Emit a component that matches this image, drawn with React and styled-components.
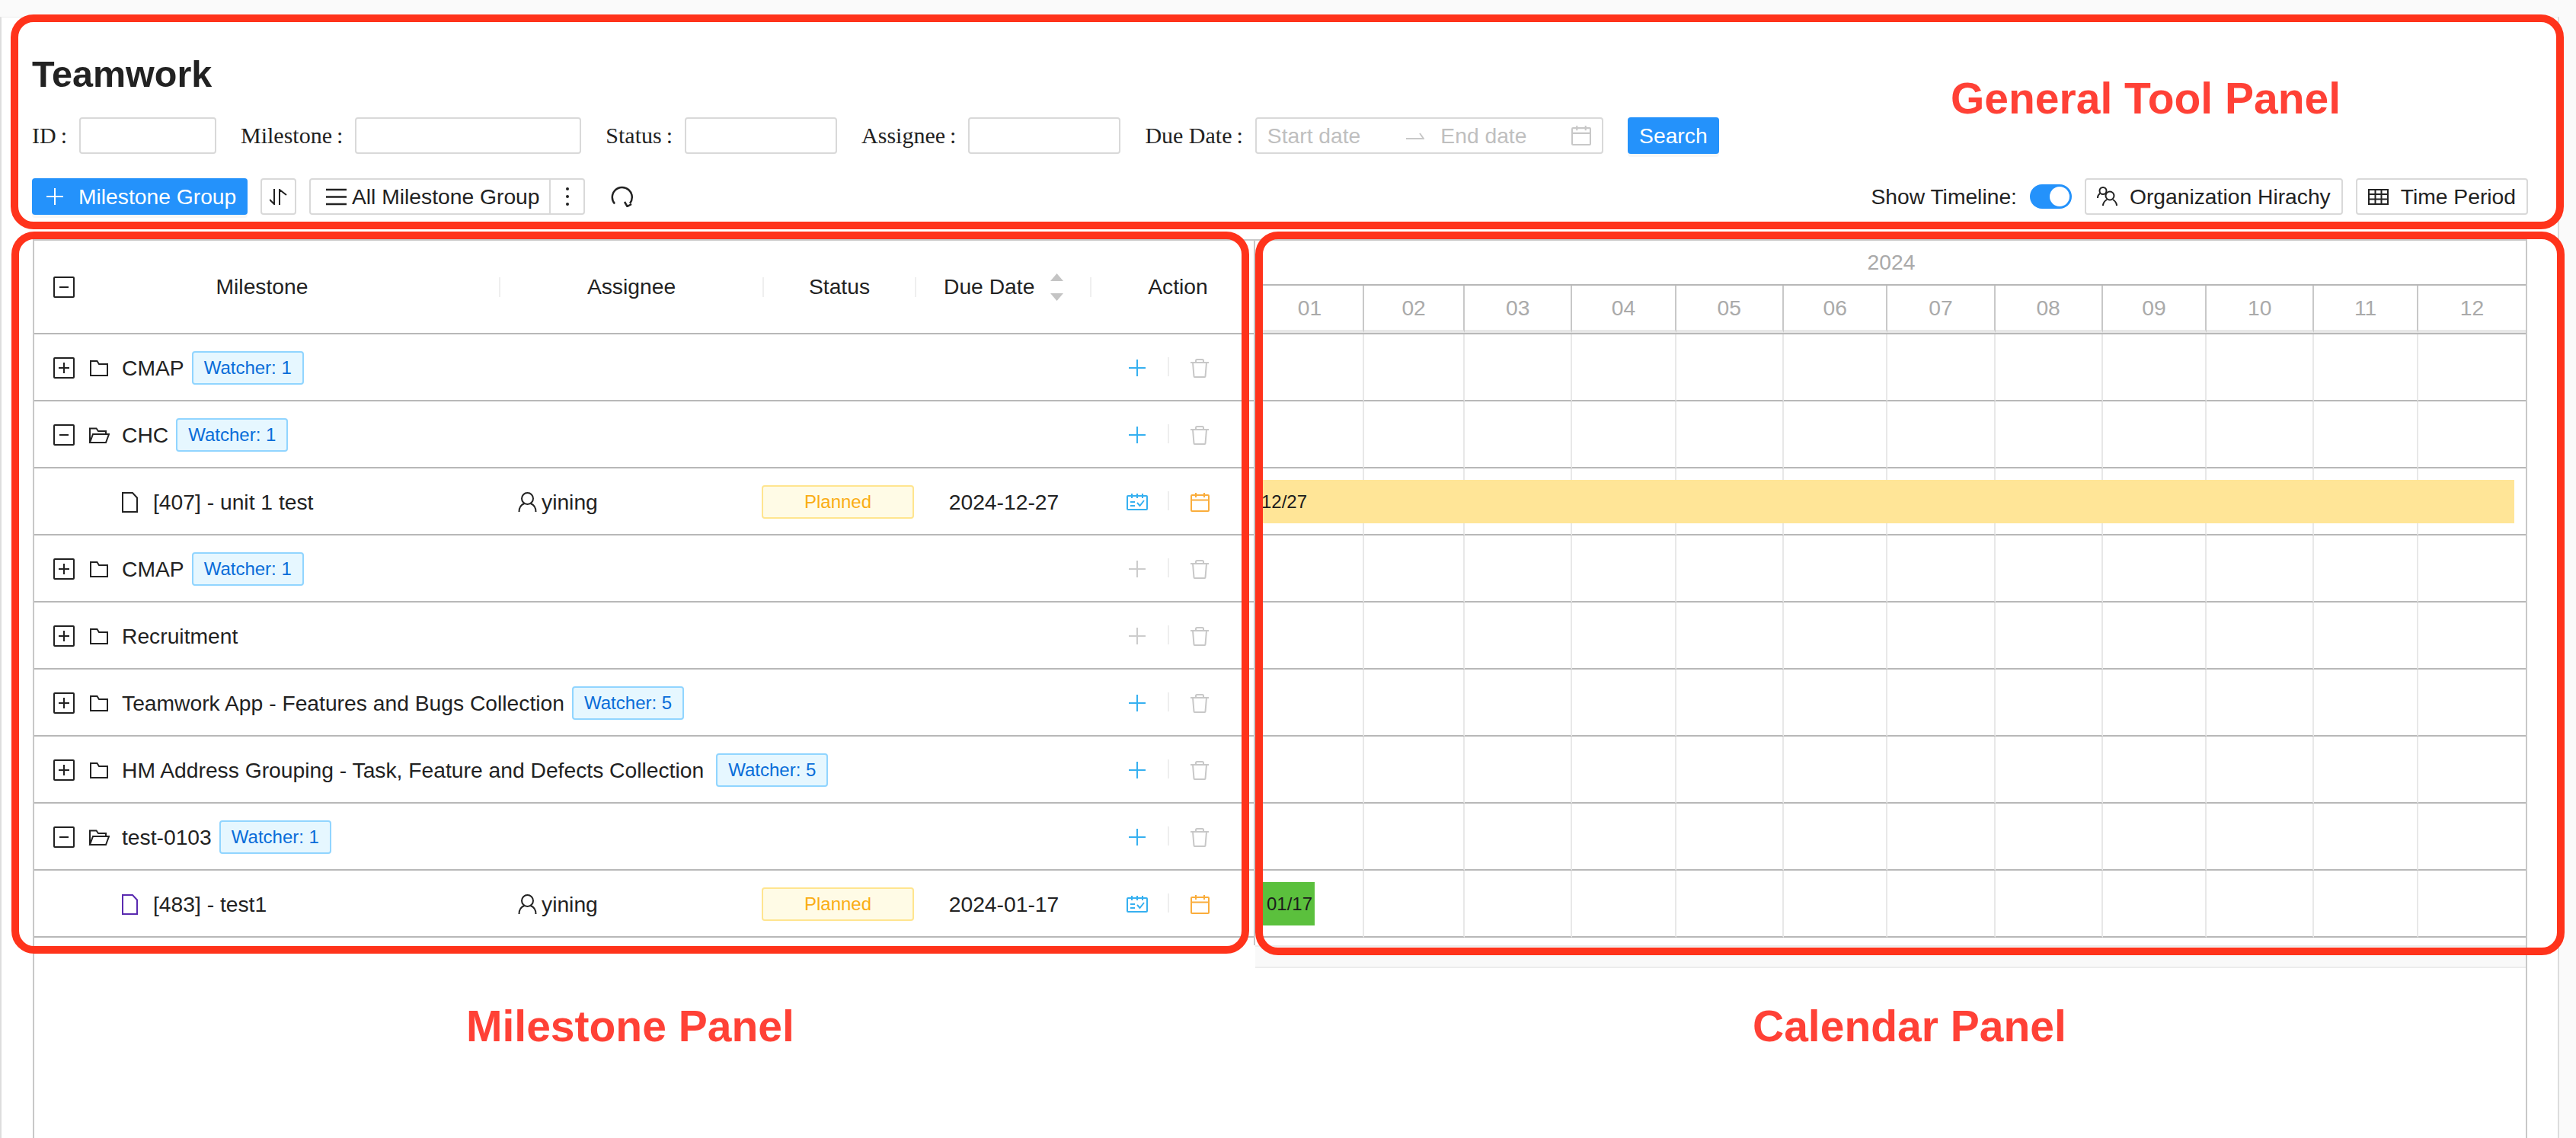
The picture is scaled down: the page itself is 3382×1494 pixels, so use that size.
import React from 'react';
import styled, {createGlobalStyle} from 'styled-components';

const GlobalStyle = createGlobalStyle`
  html, body {
    margin: 0;
    padding: 0;
    background: #fafafa;
  }
  * {
    box-sizing: border-box;
  }
`;

const Page = styled.div`
  position: relative;
  width: 3382px;
  height: 1494px;
  padding: 22px 22px 0 0;
  overflow: hidden;
  font-family: "Liberation Sans", Arial, sans-serif;
  font-size: 28.25px;
  color: #222;
`;

const Card = styled.div`
  display: flex;
  flex-direction: column;
  height: 100%;
  padding: 46px 42px 0 40px;
  background: #fff;
  border-left: 2px solid #ddd;
  border-right: 2px solid #ddd;
  border-top: 1px solid #eee;
`;

const Title = styled.h1`
  margin: 0 0 29px;
  font-size: 48.5px;
  line-height: 56px;
  font-weight: 700;
  color: #222;
`;

const FilterRow = styled.div`
  display: flex;
  gap: 32px;
  height: 48px;
`;

const Field = styled.label`
  display: flex;
  align-items: center;
  gap: 16px;
`;

const FieldLabel = styled.span`
  font-family: "Liberation Serif", "Times New Roman", serif;
  font-size: 30px;
  color: #222;
  white-space: nowrap;

  &::after {
    content: ":";
    margin-left: 6px;
  }
`;

const TextInput = styled.input`
  width: ${p => p.$w}px;
  height: 48px;
  border: 2px solid #d9d9d9;
  border-radius: 4px;
  background: #fff;
`;

const RangeInput = styled.div`
  display: flex;
  align-items: center;
  width: 457px;
  height: 48px;
  padding: 0 14px;
  border: 2px solid #d9d9d9;
  border-radius: 4px;
  color: #bfbfbf;
`;

const RangeText = styled.span`
  width: ${p => p.$w}px;
  margin-left: ${p => p.$left || 0}px;
`;

const SearchButton = styled.button`
  width: 120px;
  height: 48px;
  padding: 0;
  border: 0;
  border-radius: 4px;
  background: #2492fb;
  box-shadow: 0 4px 0 rgba(0, 0, 0, 0.03);
  color: #fff;
  font: inherit;
`;

const Toolbar = styled.div`
  display: flex;
  align-items: center;
  justify-content: space-between;
  height: 48px;
  margin: 32px -3px 32px 0;
`;

const ToolGroup = styled.div`
  display: flex;
  align-items: center;
  gap: 17px;
`;

const PrimaryButton = styled.button`
  display: flex;
  align-items: center;
  gap: 20px;
  width: 283px;
  height: 48px;
  padding: 0 0 0 19px;
  border: 0;
  border-radius: 4px;
  background: #2492fb;
  box-shadow: 0 4px 0 rgba(0, 0, 0, 0.03);
  color: #fff;
  font: inherit;
`;

const DefaultButton = styled.button`
  display: flex;
  align-items: center;
  gap: 16px;
  height: 48px;
  padding: 0 ${p => p.$pad || 14}px;
  border: 2px solid #d9d9d9;
  border-radius: 4px;
  background: #fff;
  color: #222;
  font: inherit;
  white-space: nowrap;
`;

const SplitButton = styled.div`
  display: flex;
  align-items: stretch;
  width: 362px;
  height: 48px;
  border: 2px solid #d9d9d9;
  border-radius: 4px;
`;

const SplitMain = styled.div`
  display: flex;
  align-items: center;
  gap: 7px;
  width: 315px;
  padding-left: 20px;
  border-right: 2px solid #d9d9d9;
  white-space: nowrap;
`;

const SplitMore = styled.div`
  flex: 1;
  display: flex;
  align-items: center;
  justify-content: center;
`;

const RefreshHolder = styled.div`
  display: flex;
  margin-left: 17px;
`;

const SwitchLabel = styled.span`
  white-space: nowrap;
`;

const Switch = styled.div`
  display: flex;
  align-items: center;
  justify-content: flex-end;
  width: 55px;
  height: 32px;
  padding-right: 3px;
  border-radius: 16px;
  background: #2492fb;
`;

const SwitchKnob = styled.div`
  width: 26px;
  height: 26px;
  border-radius: 50%;
  background: #fff;
`;

const Board = styled.div`
  flex: 1;
  display: flex;
  align-items: flex-start;
  margin: 0 0 0 1px;
  width: 3275px;
  border: 2px solid #c8c8c8;
  border-bottom: 0;
`;

const MilestonePanel = styled.div`
  width: 1603px;
  padding-bottom: 10px;
  border-right: 2px solid #c8c8c8;
`;

const TABLE_COLUMNS = '612px 346px 200px 230px 213px';

const HeaderRow = styled.div`
  display: grid;
  grid-template-columns: ${TABLE_COLUMNS};
  align-items: center;
  height: 123px;
  border-bottom: 2px solid #b8b8b8;
`;

const HeaderCell = styled.div`
  display: flex;
  align-items: center;
  justify-content: ${p => p.$justify || 'center'};
  gap: 21px;
  height: 26px;
  padding-left: ${p => p.$left || 0}px;
  border-right: ${p => (p.$last ? 0 : '2px solid #efefef')};
`;

const HeaderName = styled.span`
  flex: 1;
  padding-right: 86px;
  text-align: center;
`;

const SortIcons = styled.span`
  display: flex;
  flex-direction: column;
  gap: 16px;
`;

const TableRow = styled.div`
  display: grid;
  grid-template-columns: ${TABLE_COLUMNS};
  align-items: center;
  height: 88px;
  padding-top: 2px;
  border-bottom: 2px solid #b8b8b8;
`;

const NameCell = styled.div`
  grid-column: ${p => (p.$wide ? '1 / 5' : 'auto')};
  display: flex;
  align-items: center;
  padding-left: ${p => p.$left}px;
`;

const Expander = styled.span`
  display: flex;
  align-items: center;
  justify-content: center;
  flex: none;
  width: 28px;
  height: 28px;
  margin-right: ${p => p.$gap}px;
  border: 2px solid #222;
  border-radius: 2px;
`;

const FolderSlot = styled.span`
  display: flex;
  justify-content: center;
  width: 28px;
  margin-right: 16px;
  margin-left: -2px;
`;

const Tag = styled.span`
  display: inline-flex;
  align-items: center;
  justify-content: center;
  height: 44px;
  padding: 0 ${p => (p.$block ? 0 : 14)}px;
  width: ${p => (p.$block ? '200px' : 'auto')};
  margin-left: ${p => p.$gap}px;
  border: 2px solid ${p => (p.$tone === 'gold' ? '#ffe58f' : '#91d5ff')};
  border-radius: 4px;
  background: ${p => (p.$tone === 'gold' ? '#fffbe6' : '#e6f7ff')};
  color: ${p => (p.$tone === 'gold' ? '#faad14' : '#096dd9')};
  font-size: 24px;
`;

const LeafName = styled.span`
  margin-left: 20px;
`;

const AssigneeCell = styled.div`
  display: flex;
  align-items: center;
  gap: 6px;
  padding-left: 23px;
`;

const DateCell = styled.div`
  text-align: center;
`;

const ActionCell = styled.div`
  display: flex;
  align-items: center;
  justify-content: center;
  padding-right: 11px;
`;

const ActionSlot = styled.span`
  display: flex;
  justify-content: center;
  width: 80px;
`;

const ActionDivider = styled.span`
  width: 2px;
  height: 25px;
  margin-top: -4px;
  background: #eee;
`;

const CalendarPanel = styled.div`
  flex: 1;
  min-width: 0;
  padding-left: 2px;
`;

const YearRow = styled.div`
  height: 59px;
  line-height: 56px;
  text-align: center;
  color: #aaa;
  border-bottom: 2px solid #b8b8b8;
`;

const MONTHS = [
  ['01', 31], ['02', 29], ['03', 31], ['04', 30], ['05', 31], ['06', 30],
  ['07', 31], ['08', 31], ['09', 30], ['10', 31], ['11', 30], ['12', 31],
];

const MONTH_COLUMNS = MONTHS.map(m => `${m[1]}fr`).join(' ');

const MonthRow = styled.div`
  display: grid;
  grid-template-columns: ${MONTH_COLUMNS};
  border-bottom: 2px solid #b8b8b8;
`;

const MonthCell = styled.div`
  height: 62px;
  padding-top: 1px;
  line-height: 56px;
  text-align: center;
  color: #aaa;
  border-right: ${p => (p.$last ? 0 : '2px solid #c8c8c8')};
  border-bottom: 4px solid #e8e8e8;
`;

const TimelineRow = styled.div`
  position: relative;
  display: grid;
  grid-template-columns: ${MONTH_COLUMNS};
  height: 88px;
`;

const TimelineCell = styled.div`
  border-right: ${p => (p.$last ? 0 : '2px solid #e8e8e8')};
  border-bottom: 2px solid #b8b8b8;
`;

const Bar = styled.div`
  position: absolute;
  top: 15px;
  left: -1px;
  display: flex;
  align-items: center;
  width: calc(100% * ${p => p.$days} / 366);
  height: 57px;
  padding-left: ${p => p.$inset}px;
  background: ${p => p.$color};
  color: #1c1c1c;
  font-size: 24px;
  white-space: nowrap;
`;

const ScrollTrack = styled.div`
  height: 30px;
  margin: 10px 0 0 -2px;
  background: #f9f9f9;
  border-top: 2px solid #ececec;
  border-bottom: 2px solid #ececec;
`;

const Frame = styled.div`
  position: absolute;
  left: ${p => p.$x}px;
  top: ${p => p.$y}px;
  width: ${p => p.$w}px;
  height: ${p => p.$h}px;
  border: 10px solid #ff331b;
  border-radius: 30px;
`;

const Callout = styled.div`
  position: absolute;
  left: ${p => p.$x}px;
  top: ${p => p.$y}px;
  font-size: 57px;
  line-height: 56px;
  font-weight: 700;
  color: #ff4136;
  white-space: nowrap;
`;

const Stroke = styled.svg`
  display: block;
  flex: none;
  fill: none;
  stroke: ${p => p.$color || '#222'};
  stroke-width: ${p => p.$sw || 2};
`;

const Fold = ({open}) => open ? (
  <Stroke width="28" height="21" viewBox="0 0 28 21">
    <path d="M2 20V1.5h8.5l2.500 3.5h10v4M2 20L6 9h21l-4 11z" />
  </Stroke>
) : (
  <Stroke width="24" height="21" viewBox="0 0 24 21">
    <path d="M1 1h8.5l2.5 4h11v15H1z" />
  </Stroke>
);

const FileIcon = ({color}) => (
  <Stroke width="21" height="27" viewBox="0 0 21 27" $color={color}>
    <path d="M1 1h13l6 6.5V26H1z" />
  </Stroke>
);

const UserIcon = () => (
  <Stroke width="25" height="26" viewBox="0 0 25 26">
    <circle cx="12.5" cy="8.5" r="7.5" />
    <path d="M1.5 26c0-6 3-9.500 7-11M23.500 26c0-6-3-9.500-7-11" />
  </Stroke>
);

const PlusIcon = ({color, size = 22}) => (
  <Stroke width={size} height={size} viewBox="0 0 22 22" $color={color}>
    <path d="M11 0v22M0 11h22" />
  </Stroke>
);

const TrashIcon = () => (
  <Stroke width="24" height="25" viewBox="0 0 24 25" $color="#c8c8c8">
    <path d="M0 5h24M7 5V2.5q0-1.500 1.500-1.500h7q1.500 0 1.500 1.500V5M3 5l1.500 18q0 1 1 1h13q1 0 1-1L21 5" />
  </Stroke>
);

const PlanIcon = () => (
  <Stroke width="28" height="22" viewBox="0 0 28 22" $color="#36b0f0">
    <rect x="1" y="3" width="26" height="18" rx="1" />
    <path d="M7 0v6M14 0v6M21 0v6M5 11h6M5 16h6M14 12l3.500 4L23 9" />
  </Stroke>
);

const DayIcon = ({color, width = 25, height = 25}) => (
  <Stroke width={width} height={height} viewBox="0 0 25 25" $color={color}>
    <rect x="1" y="3" width="23" height="21" rx="1" />
    <path d="M1 9.5h23M7 0v6M18 0v6" />
  </Stroke>
);

const PlusOrMinus = ({plus}) => (
  <Stroke width="14" height="14" viewBox="0 0 14 14">
    <path d={plus ? 'M0 7h14M7 0v14' : 'M1 7h12'} />
  </Stroke>
);

const SortIcon = () => (
  <Stroke width="23" height="21" viewBox="0 0 23 21">
    <path d="M6 0v20L0 14M13 21V1l9 7" />
  </Stroke>
);

const MenuIcon = () => (
  <Stroke width="27" height="23" viewBox="0 0 27 23" $sw={2.5}>
    <path d="M0 2h27M0 11.500h27M0 21h27" />
  </Stroke>
);

const DotsIcon = () => (
  <svg width="4" height="24" viewBox="0 0 4 24" fill="#222">
    <circle cx="2" cy="2" r="2" />
    <circle cx="2" cy="12" r="2" />
    <circle cx="2" cy="22" r="2" />
  </svg>
);

const RefreshIcon = () => (
  <Stroke width="30" height="28" viewBox="0 0 30 28" $sw={2.5}>
    <path d="M5 23.500A13 13 0 1 1 25 23M18 21l3.500 6 5.500-3" />
  </Stroke>
);

const OrgIcon = () => (
  <Stroke width="27" height="26" viewBox="0 0 27 26">
    <circle cx="8" cy="5.5" r="4.500" />
    <circle cx="17" cy="12" r="5.500" />
    <path d="M1 15c0-3 1.500-5 3-6M8 25c0-4 2-6 5-8M26 25c0-4-2-6-5-8" />
  </Stroke>
);

const GridIcon = () => (
  <Stroke width="27" height="21" viewBox="0 0 27 21">
    <path d="M1 1h25v19H1zM1 7h25M1 13.500h25M9.500 1v19M17.500 1v19" />
  </Stroke>
);

const RangeArrow = () => (
  <Stroke width="24" height="9" viewBox="0 0 24 9" $color="#c8c8c8">
    <path d="M0 8h23L18 1" />
  </Stroke>
);

const Caret = ({down}) => (
  <svg width="17" height="10" viewBox="0 0 17 10" fill="#c4c4c4">
    <path d={down ? 'M0 0h17L8.500 10z' : 'M0 10h17L8.500 0z'} />
  </svg>
);

const rows = [
  {name: 'CMAP', watchers: 1},
  {name: 'CHC', watchers: 1, open: true},
  {leaf: '[407] - unit 1 test', date: '2024-12-27', bar: {days: 363, inset: 7, color: '#ffe597'}},
  {name: 'CMAP', watchers: 1, muted: true},
  {name: 'Recruitment', muted: true},
  {name: 'Teamwork App - Features and Bugs Collection', watchers: 5},
  {name: 'HM Address Grouping - Task, Feature and Defects Collection', watchers: 5, tagGap: 16},
  {name: 'test-0103', watchers: 1, open: true},
  {leaf: '[483] - test1', date: '2024-01-17', fileColor: '#5a2ab0', bar: {days: 17, inset: 14, color: '#5bc03d'}},
];

const barLabel = row => row.date.slice(5).replace('-', '/');

const GroupRow = ({row}) => (
  <TableRow>
    <NameCell $wide $left={25}>
      <Expander $gap={20}>
        <PlusOrMinus plus={!row.open} />
      </Expander>
      <FolderSlot>
        <Fold open={row.open} />
      </FolderSlot>
      <span>{row.name}</span>
      {row.watchers && <Tag $gap={row.tagGap || 10}>Watcher: {row.watchers}</Tag>}
    </NameCell>
    <ActionCell>
      <ActionSlot><PlusIcon color={row.muted ? '#cccccc' : '#36b0f0'} /></ActionSlot>
      <ActionDivider />
      <ActionSlot><TrashIcon /></ActionSlot>
    </ActionCell>
  </TableRow>
);

const LeafRow = ({row}) => (
  <TableRow>
    <NameCell $left={115}>
      <FileIcon color={row.fileColor} />
      <LeafName>{row.leaf}</LeafName>
    </NameCell>
    <AssigneeCell>
      <UserIcon />
      <span>yining</span>
    </AssigneeCell>
    <div>
      <Tag $block $gap={-3} $tone="gold">Planned</Tag>
    </div>
    <DateCell>{row.date}</DateCell>
    <ActionCell>
      <ActionSlot><PlanIcon /></ActionSlot>
      <ActionDivider />
      <ActionSlot><DayIcon color="#faad3c" /></ActionSlot>
    </ActionCell>
  </TableRow>
);

export default function App() {
  return (
    <Page>
      <GlobalStyle />
      <Card>
        <Title>Teamwork</Title>

        <FilterRow>
          <Field><FieldLabel>ID</FieldLabel><TextInput $w={180} /></Field>
          <Field><FieldLabel>Milestone</FieldLabel><TextInput $w={297} /></Field>
          <Field><FieldLabel>Status</FieldLabel><TextInput $w={200} /></Field>
          <Field><FieldLabel>Assignee</FieldLabel><TextInput $w={200} /></Field>
          <Field>
            <FieldLabel>Due Date</FieldLabel>
            <RangeInput>
              <RangeText $w={183}>Start date</RangeText>
              <RangeArrow />
              <RangeText $w={172} $left={21}>End date</RangeText>
              <DayIcon color="#c8c8c8" width={26} height={26} />
            </RangeInput>
          </Field>
          <SearchButton>Search</SearchButton>
        </FilterRow>

        <Toolbar>
          <ToolGroup>
            <PrimaryButton>
              <PlusIcon color="#fff" />
              Milestone Group
            </PrimaryButton>
            <DefaultButton $pad={10}><SortIcon /></DefaultButton>
            <SplitButton>
              <SplitMain><MenuIcon />All Milestone Group</SplitMain>
              <SplitMore><DotsIcon /></SplitMore>
            </SplitButton>
            <RefreshHolder><RefreshIcon /></RefreshHolder>
          </ToolGroup>
          <ToolGroup>
            <SwitchLabel>Show Timeline:</SwitchLabel>
            <Switch><SwitchKnob /></Switch>
            <DefaultButton><OrgIcon />Organization Hirachy</DefaultButton>
            <DefaultButton><GridIcon />Time Period</DefaultButton>
          </ToolGroup>
        </Toolbar>

        <Board>
          <MilestonePanel>
            <HeaderRow>
              <HeaderCell $left={25}>
                <Expander $gap={0}><PlusOrMinus /></Expander>
                <HeaderName>Milestone</HeaderName>
              </HeaderCell>
              <HeaderCell>Assignee</HeaderCell>
              <HeaderCell>Status</HeaderCell>
              <HeaderCell $justify="flex-start" $left={36}>
                Due Date
                <SortIcons><Caret /><Caret down /></SortIcons>
              </HeaderCell>
              <HeaderCell $last $left={14}>Action</HeaderCell>
            </HeaderRow>
            {rows.map((row, i) => row.leaf
              ? <LeafRow key={i} row={row} />
              : <GroupRow key={i} row={row} />)}
          </MilestonePanel>

          <CalendarPanel>
            <YearRow>2024</YearRow>
            <MonthRow>
              {MONTHS.map((m, i) => <MonthCell key={m[0]} $last={i === 11}>{m[0]}</MonthCell>)}
            </MonthRow>
            {rows.map((row, i) => (
              <TimelineRow key={i}>
                {MONTHS.map((m, j) => <TimelineCell key={m[0]} $last={j === 11} />)}
                {row.bar && (
                  <Bar $days={row.bar.days} $inset={row.bar.inset} $color={row.bar.color}>
                    {barLabel(row)}
                  </Bar>
                )}
              </TimelineRow>
            ))}
            <ScrollTrack />
          </CalendarPanel>
        </Board>
      </Card>

      <Frame $x={14} $y={19} $w={3352} $h={282} />
      <Frame $x={15} $y={304} $w={1625} $h={948} />
      <Frame $x={1648} $y={304} $w={1719} $h={950} />
      <Callout $x={2561} $y={101}>General Tool Panel</Callout>
      <Callout $x={612} $y={1319}>Milestone Panel</Callout>
      <Callout $x={2301} $y={1319}>Calendar Panel</Callout>
    </Page>
  );
}
